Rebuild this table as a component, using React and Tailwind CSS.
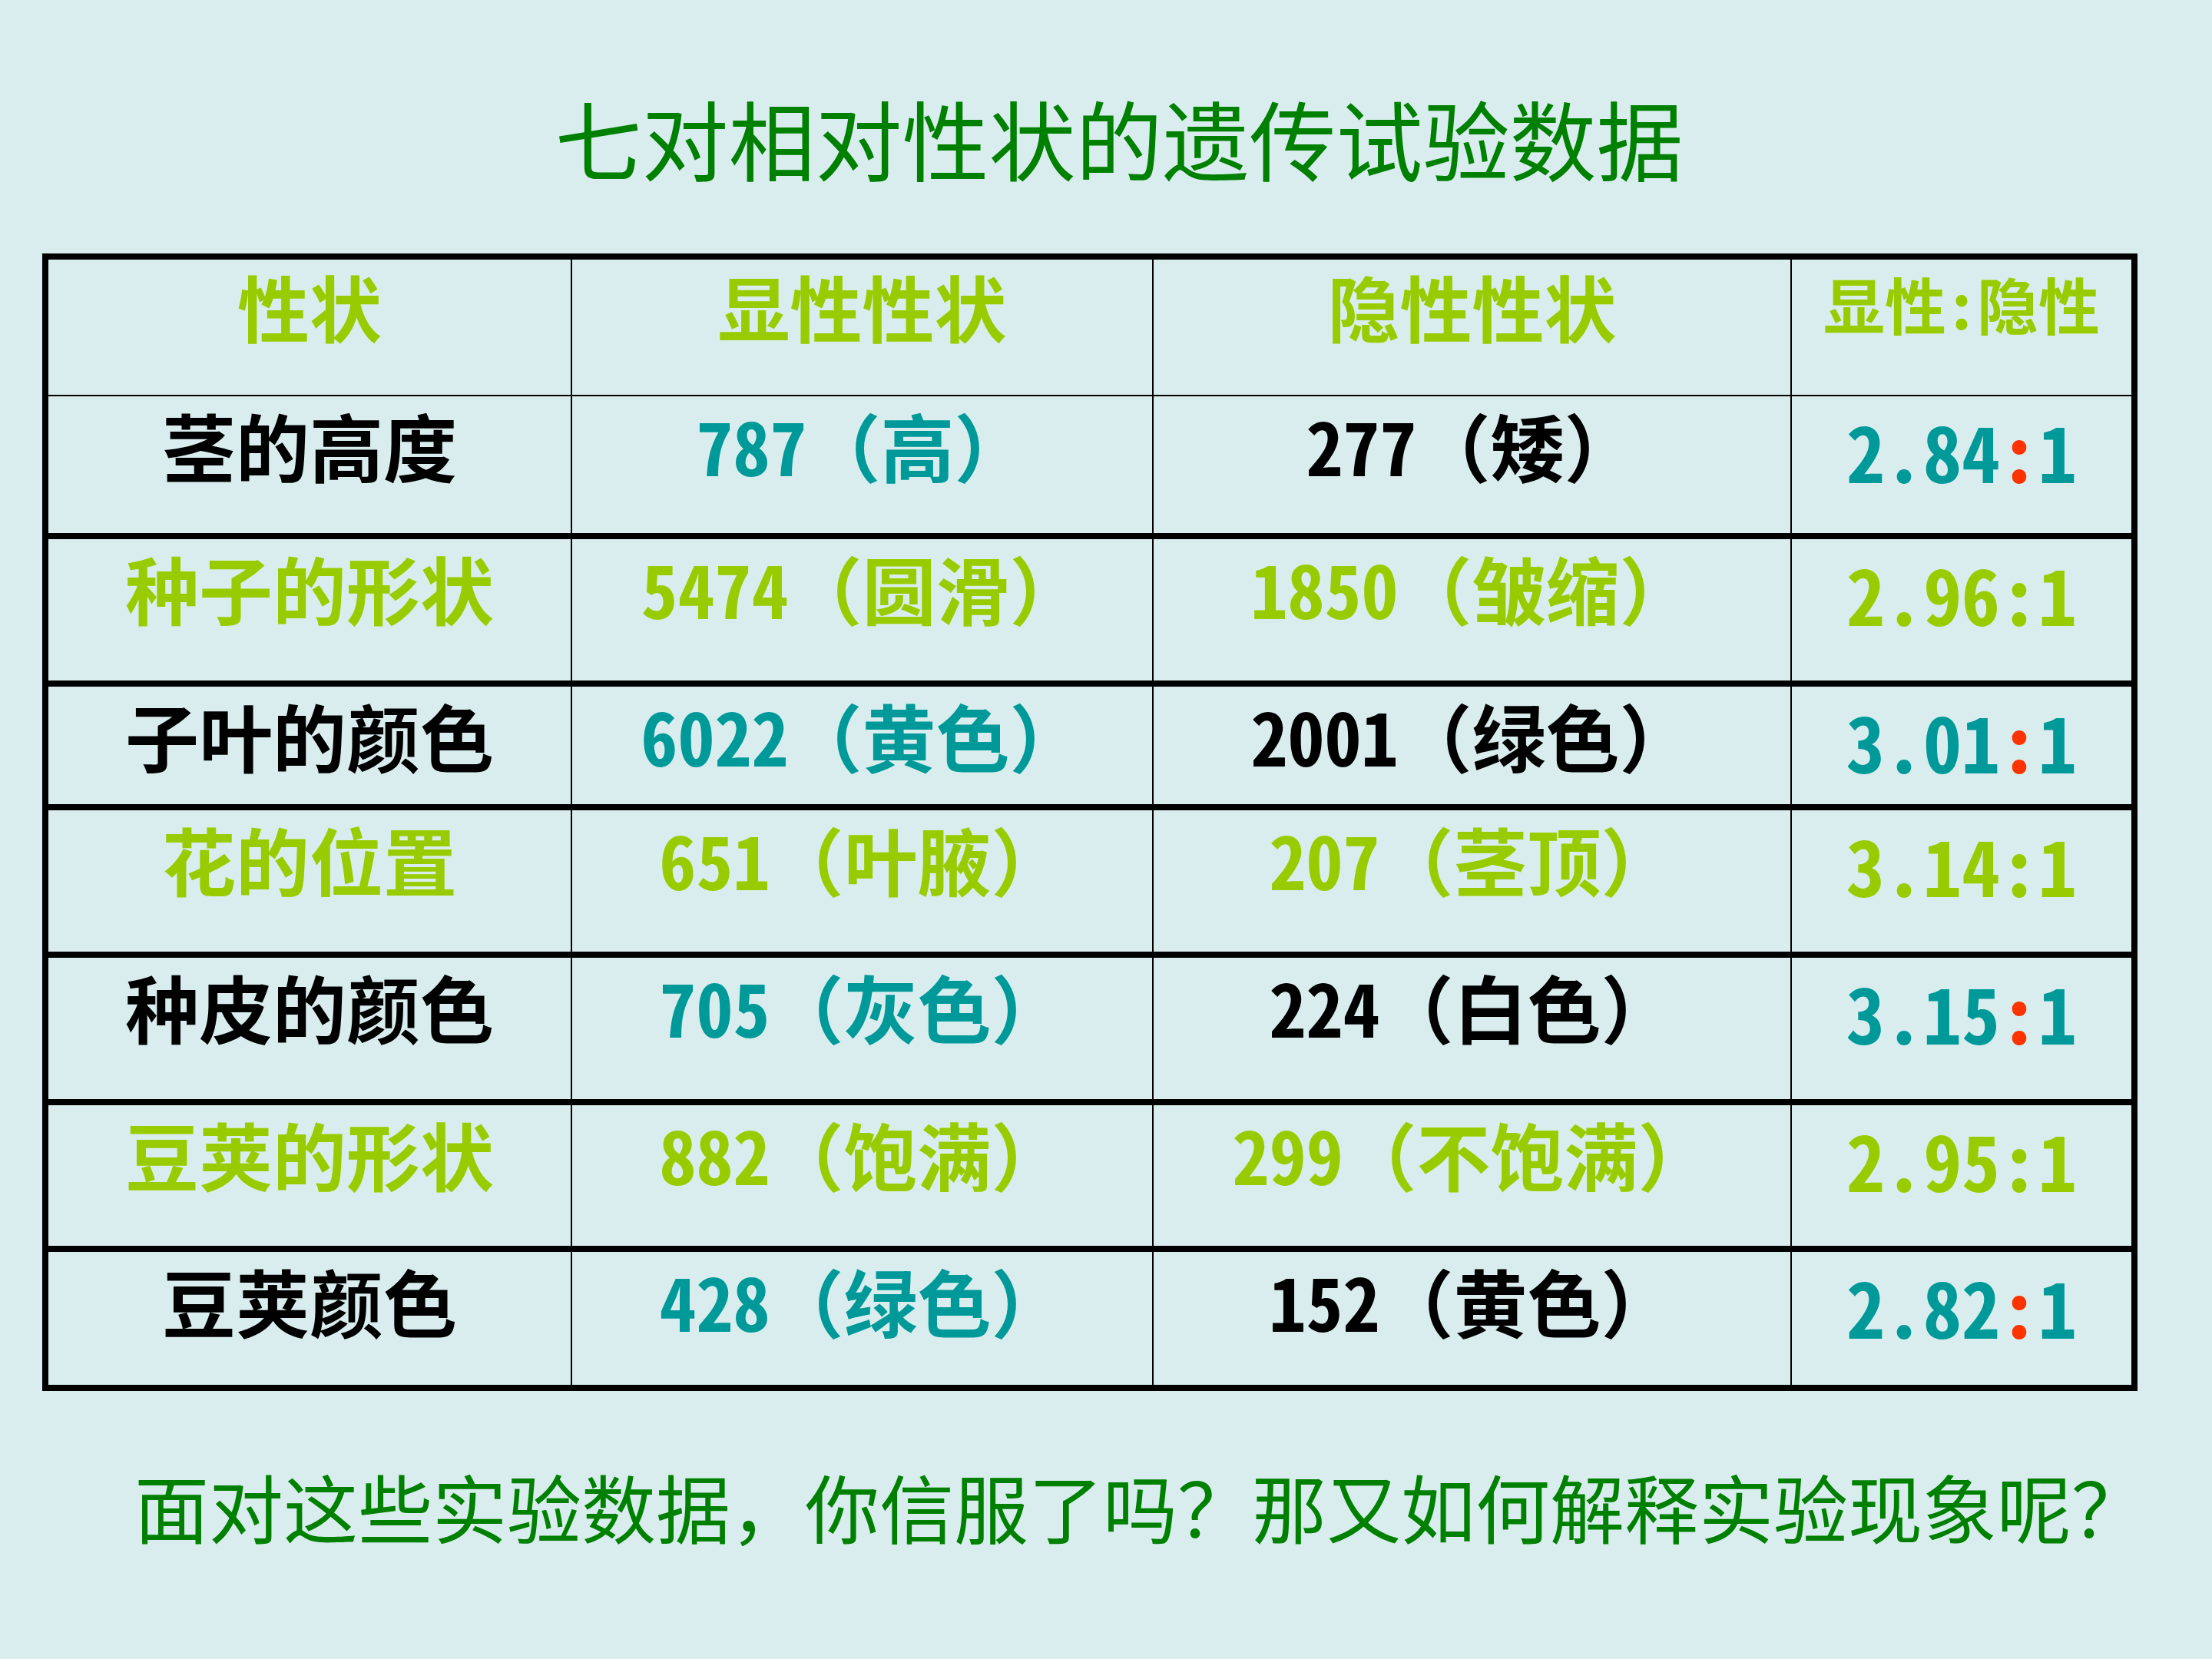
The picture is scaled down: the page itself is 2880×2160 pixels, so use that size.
import React from 'react';

// 七对相对性状 — 数据表
const ROWS = [
  { name: '茎的高度', dom: ['787', '高'], rec: ['277', '矮'], ratio: '2.84', tone: 'dark', h: 'h-[180px] border-t-2' },
  { name: '种子的形状', dom: ['5474', '圆滑'], rec: ['1850', '皱缩'], ratio: '2.96', tone: 'lime', h: 'h-[192px] border-t-8' },
  { name: '子叶的颜色', dom: ['6022', '黄色'], rec: ['2001', '绿色'], ratio: '3.01', tone: 'dark', h: 'h-[161px] border-t-8' },
  { name: '花的位置', dom: ['651', '叶腋'], rec: ['207', '茎顶'], ratio: '3.14', tone: 'lime', h: 'h-[192px] border-t-8' },
  { name: '种皮的颜色', dom: ['705', '灰色'], rec: ['224', '白色'], ratio: '3.15', tone: 'dark', h: 'h-[192px] border-t-8' },
  { name: '豆荚的形状', dom: ['882', '饱满'], rec: ['299', '不饱满'], ratio: '2.95', tone: 'lime', h: 'h-[191px] border-t-8' },
  { name: '豆荚颜色', dom: ['428', '绿色'], rec: ['152', '黄色'], ratio: '2.82', tone: 'dark', h: 'h-[181px] border-t-8' },
];

const COLS = 'grid grid-cols-[680px_757px_831px_444px]';
const cell = 'flex justify-center border-l-2 border-black';
const half = "[font-feature-settings:'hwid']";

// 数字用半角，括号保持全角
function Count({ v }) {
  return (
    <span>
      <span className={half}>{v[0]}</span>（{v[1]}）
    </span>
  );
}

function Ratio({ value, tone }) {
  const lime = tone === 'lime';
  return (
    <span className={`${half} ${lime ? 'text-[#99CC00]' : 'text-[#009999]'}`}>
      {value}
      <span className={lime ? 'text-[#99CC00]' : 'text-[#FF3300]'}>:</span>1
    </span>
  );
}

export default function App() {
  return (
    <div className="w-[2880px] h-[2160px] bg-[#D9EDEE] font-['Noto_Sans_CJK_SC',sans-serif] overflow-hidden">
      <h1 className="pt-[122px] pl-[34px] flex justify-center text-[113px] leading-none font-normal text-[#008000]">
        七对相对性状的遗传试验数据
      </h1>

      <div className="mt-[95px] ml-[55px] w-[2728px] border-8 border-black">
        <div className={`${COLS} h-[176px] font-bold text-[#99CC00] leading-none`}>
          <div className="flex justify-center pt-[13px] text-[94px]">性状</div>
          <div className={`${cell} pt-[13px] text-[94px]`}>显性性状</div>
          <div className={`${cell} pt-[13px] text-[94px]`}>隐性性状</div>
          <div className={`${cell} ${half} pt-[16px] text-[80px]`}>显性:隐性</div>
        </div>

        {ROWS.map((r) => {
          const lime = r.tone === 'lime';
          return (
            <div key={r.name} className={`${COLS} ${r.h} border-black font-bold leading-none`}>
              <div className={`flex justify-center pt-[15px] text-[96px] ${lime ? 'text-[#99CC00]' : 'text-black'}`}>{r.name}</div>
              <div className={`${cell} pt-[15px] text-[96px] ${lime ? 'text-[#99CC00]' : 'text-[#009999]'}`}>
                <Count v={r.dom} />
              </div>
              <div className={`${cell} pt-[15px] text-[96px] ${lime ? 'text-[#99CC00]' : 'text-black'}`}>
                <Count v={r.rec} />
              </div>
              <div className={`${cell} pt-[20px] text-[100px]`}>
                <Ratio value={r.ratio} tone={r.tone} />
              </div>
            </div>
          );
        })}
      </div>

      <p className="mt-[100px] pl-[175px] text-[97px] leading-none font-normal text-[#008000]">
        面对这些实验数据，你信服了吗？那又如何解释实验现象呢？
      </p>
    </div>
  );
}
